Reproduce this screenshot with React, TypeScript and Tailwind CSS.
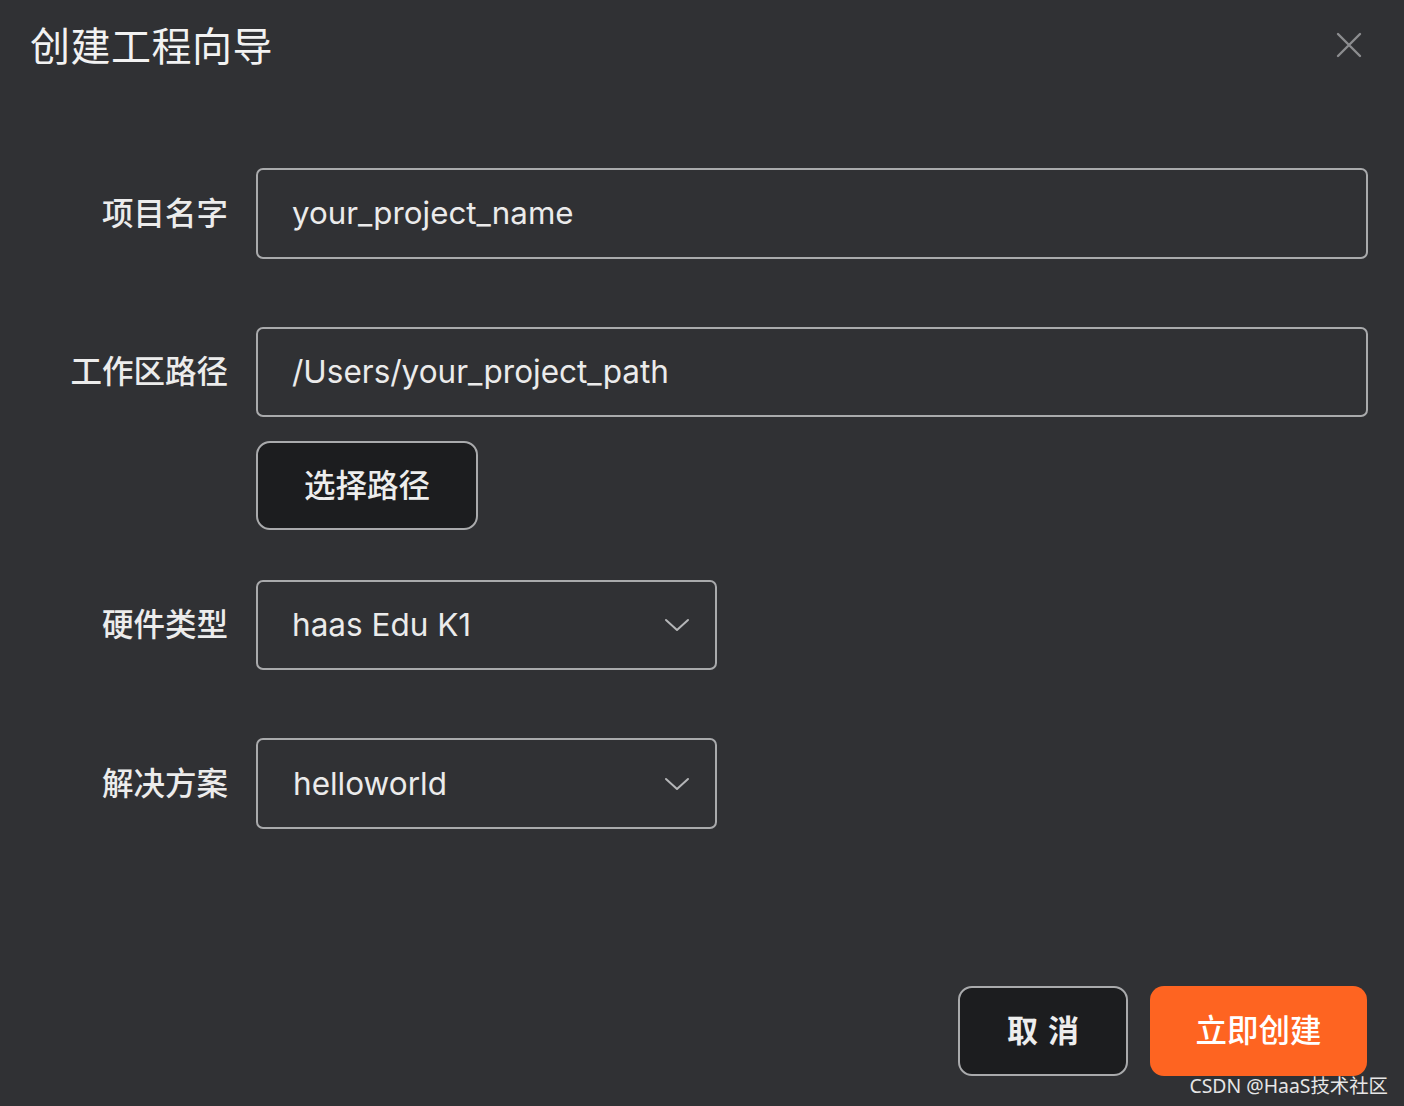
import React from "react";

const cjk = "font-['Inter','Noto_Sans_CJK_SC',sans-serif]";

function Chevron() {
  return (
    <svg width="26" height="16" viewBox="0 0 26 16" fill="none" className="shrink-0">
      <path d="M2 3 L13 13 L24 3" stroke="#b5b6b8" strokeWidth="2" strokeLinecap="round" strokeLinejoin="round" />
    </svg>
  );
}

function Label({ children }: { children: React.ReactNode }) {
  return (
    <div className="w-[228px] shrink-0 text-right text-[31.5px] font-medium leading-none text-[#ececec]">
      {children}
    </div>
  );
}

export default function App() {
  return (
    <div className={`${cjk} w-[1404px] h-[1106px] bg-[#303134] relative overflow-hidden`}>
      {/* Header */}
      <div className="flex items-start justify-between pl-[30px] pr-[42px] pt-[23px]">
        <div className="text-[40px] leading-[48px] text-[#f2f2f2] tracking-[0.5px]">创建工程向导</div>
        <svg width="26" height="26" viewBox="0 0 26 26" className="mt-[9px]">
          <path d="M2 2 L24 24 M24 2 L2 24" stroke="#8c8d90" strokeWidth="2.4" strokeLinecap="round" />
        </svg>
      </div>

      {/* Form */}
      <div className="flex flex-col pt-[97px]">
        <div className="flex items-center gap-[28px]">
          <Label>项目名字</Label>
          <div className="w-[1112px] h-[91px] rounded-[7px] border-2 border-[#a9aaac] flex items-center pl-[34px] text-[31.3px] text-[#ebebeb]">
            your_project_name
          </div>
        </div>

        <div className="flex items-center gap-[28px] mt-[68px]">
          <Label>工作区路径</Label>
          <div className="w-[1112px] h-[90px] rounded-[7px] border-2 border-[#a9aaac] flex items-center pl-[34px] text-[31.5px] text-[#ebebeb]">
            /Users/your_project_path
          </div>
        </div>

        <div className="flex mt-[24px] pl-[256px]">
          <button className="w-[222px] h-[89px] rounded-[14px] border-2 border-[#a9aaac] bg-[#1c1d1f] text-[31.5px] font-medium text-[#ededed]">
            选择路径
          </button>
        </div>

        <div className="flex items-center gap-[28px] mt-[50px]">
          <Label>硬件类型</Label>
          <div className="w-[461px] h-[90px] rounded-[7px] border-2 border-[#a9aaac] flex items-center justify-between pl-[34px] pr-[25px] text-[31.5px] text-[#ebebeb]">
            <span>haas Edu K1</span>
            <Chevron />
          </div>
        </div>

        <div className="flex items-center gap-[28px] mt-[68px]">
          <Label>解决方案</Label>
          <div className="w-[461px] h-[91px] rounded-[7px] border-2 border-[#a9aaac] flex items-center justify-between pl-[35px] pr-[25px] text-[31.5px] text-[#ebebeb]">
            <span>helloworld</span>
            <Chevron />
          </div>
        </div>
      </div>

      {/* Footer */}
      <div className="absolute left-0 right-0 top-[986px] flex justify-end gap-[22px] pr-[37px]">
        <button className="w-[170px] h-[90px] rounded-[14px] border-2 border-[#a9aaac] bg-[#1c1d1f] text-[31px] font-bold text-[#ededed] tracking-[10px] pl-[10px]">
          取消
        </button>
        <button className="w-[217px] h-[90px] rounded-[14px] bg-[#fe6421] text-[31.5px] font-medium text-white">
          立即创建
        </button>
      </div>

      <div className="absolute right-[16px] top-[1073px] text-[19.4px] leading-[26px] text-[#e6e6e6] font-['Noto_Sans','Noto_Sans_CJK_SC',sans-serif]">
        CSDN @HaaS技术社区
      </div>
    </div>
  );
}
